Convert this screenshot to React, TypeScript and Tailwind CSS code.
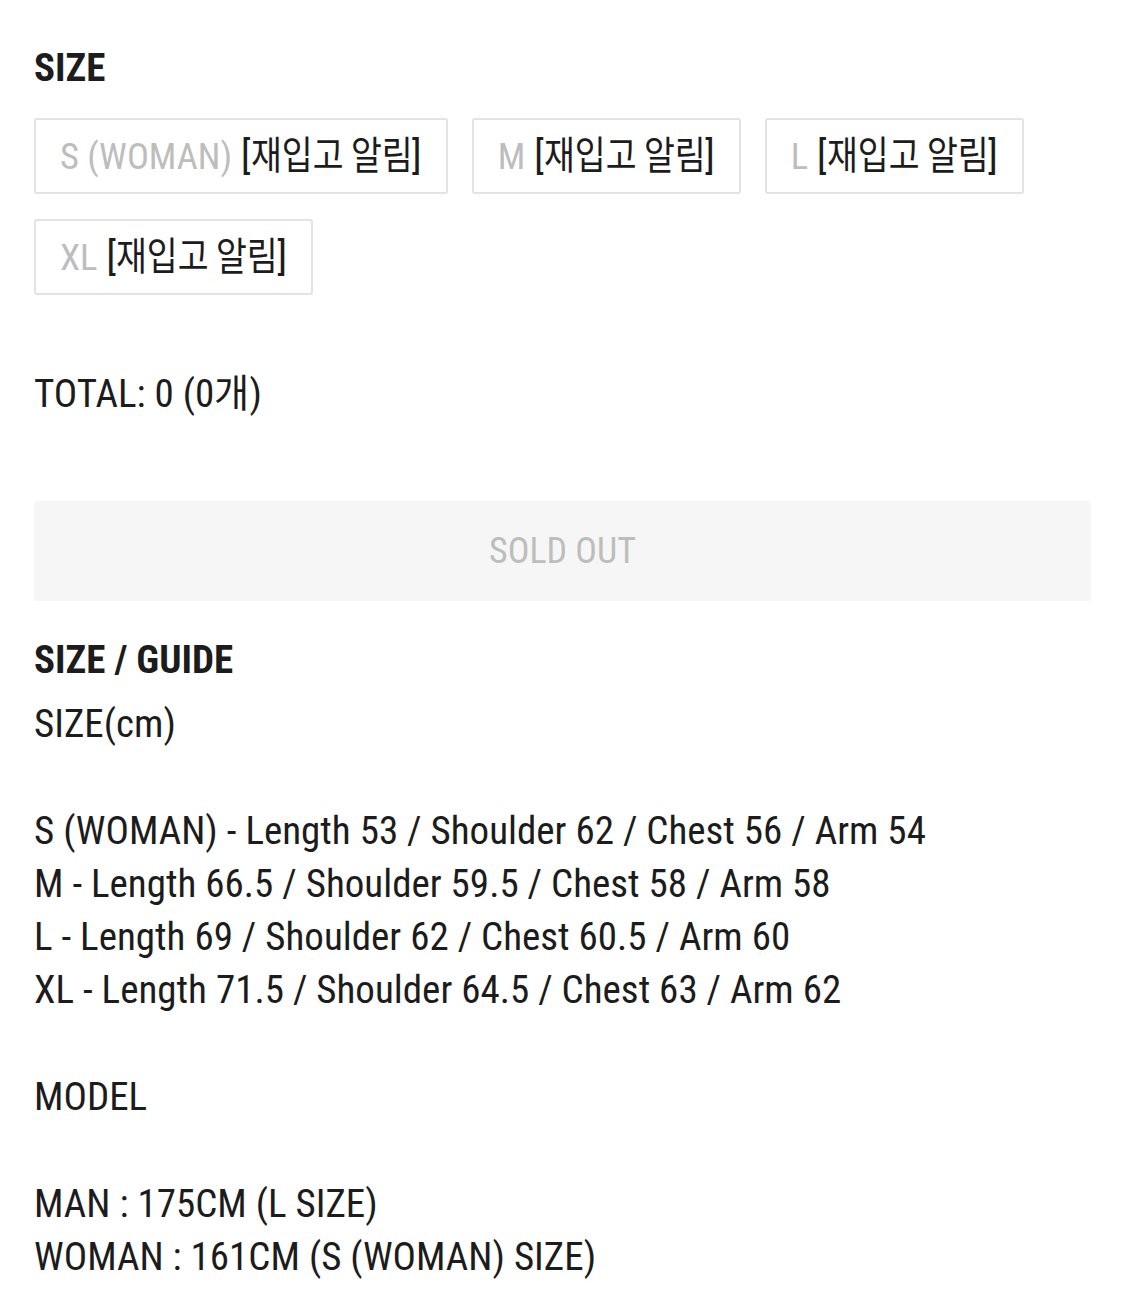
function Ko({ w }: { w: "jae" | "al" | "gae" }) {
  if (w === "jae")
    return <span className="inline-block origin-left scale-x-[0.86] -mr-[16.4px]">재입고</span>;
  if (w === "al")
    return <span className="inline-block origin-left scale-x-[0.86] -mr-[10.9px]">알림</span>;
  return <span className="inline-block origin-left scale-x-[0.98] -mr-[0.8px]">개</span>;
}

function SizeBtn({ label }: { label: string }) {
  return (
    <div className="h-[76px] pl-[24px] pr-[24px] flex items-center border-2 border-[#e3e3e3] rounded-[3px] whitespace-nowrap">
      <span className="text-[#1c1c1c]">
        <span className="text-[#bdbdbd] text-[36.5px]">{label}</span>
        &nbsp;[<Ko w="jae" /> <Ko w="al" />]
      </span>
    </div>
  );
}

export default function App() {
  return (
    <div
      className="bg-white w-[1125px] min-h-[1290px] px-[34px] pt-[42px] text-[39px] leading-[53px] text-[#1c1c1c]"
      style={{ fontFamily: "'Roboto Condensed', 'Noto Sans CJK KR', sans-serif" }}
    >
      <div className="font-bold">SIZE</div>
      <div className="mt-[23px] flex flex-wrap gap-x-[24px] gap-y-[25px]">
        <SizeBtn label="S (WOMAN)" />
        <SizeBtn label="M" />
        <SizeBtn label="L" />
        <SizeBtn label="XL" />
      </div>
      <div className="mt-[73px]">
        TOTAL: 0 (0<Ko w="gae" />)
      </div>
      <div className="mt-[80px] h-[100px] rounded-[3px] bg-[#f6f6f6] flex items-center justify-center text-[#bdbdbd] text-[36px]">
        SOLD OUT
      </div>
      <div className="mt-[33px] font-bold">SIZE / GUIDE</div>
      <div className="mt-[11px] leading-[53.3px]">
        <div>SIZE(cm)</div>
        <div className="h-[53.3px]" />
        <div>S (WOMAN) - Length 53 / Shoulder 62 / Chest 56 / Arm 54</div>
        <div>M - Length 66.5 / Shoulder 59.5 / Chest 58 / Arm 58</div>
        <div>L - Length 69 / Shoulder 62 / Chest 60.5 / Arm 60</div>
        <div>XL - Length 71.5 / Shoulder 64.5 / Chest 63 / Arm 62</div>
        <div className="h-[53.3px]" />
        <div>MODEL</div>
        <div className="h-[53.3px]" />
        <div>MAN : 175CM (L SIZE)</div>
        <div>WOMAN : 161CM (S (WOMAN) SIZE)</div>
      </div>
    </div>
  );
}
